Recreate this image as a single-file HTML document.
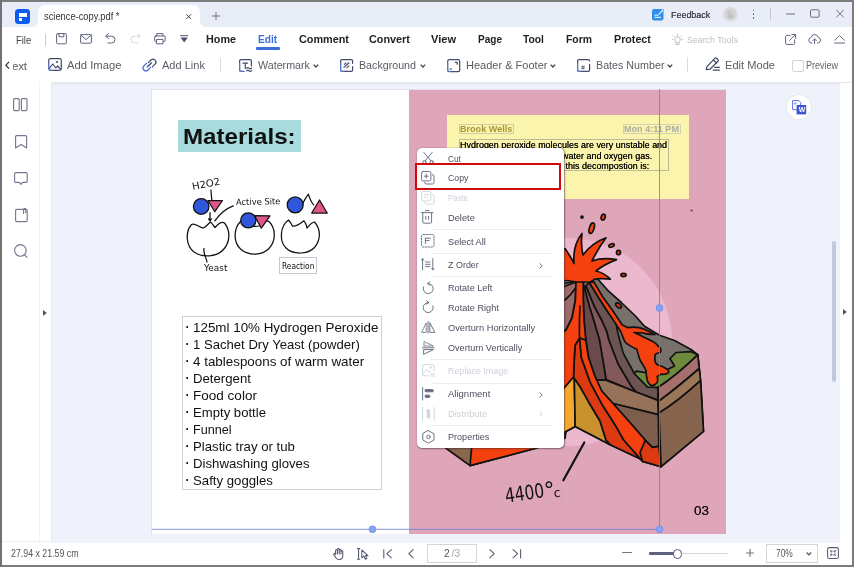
<!DOCTYPE html>
<html lang="en"><head><meta charset="utf-8"><title>science-copy.pdf</title>
<style>
html,body{margin:0;padding:0;}
body{width:854px;height:567px;overflow:hidden;background:#7c7c7c;position:relative;font-family:"Liberation Sans", sans-serif;}
.t{position:absolute;line-height:1;white-space:nowrap;transform-origin:0 50%;}
svg{overflow:visible;}
#app{position:absolute;left:0;top:0;width:854px;height:567px;overflow:hidden;will-change:transform;}
</style></head><body><div id="app">

<div style="position:absolute;left:2px;top:2px;width:850px;height:563px;background:#fff;"></div>
<div style="position:absolute;left:0px;top:0px;width:2px;height:567px;background:#727272;"></div>
<div style="position:absolute;left:2px;top:2px;width:850px;height:24.5px;background:#e9edf7;"></div>
<div style="position:absolute;left:15px;top:8.5px;width:15px;height:15px;background:#0b5cf3;border-radius:3.5px;"></div>
<div style="position:absolute;left:18.9px;top:13.3px;width:7.9px;height:3.5px;background:#fff;"></div>
<div style="position:absolute;left:18.9px;top:17.5px;width:3.3px;height:3.2px;background:#fff;"></div>
<div style="position:absolute;left:37.8px;top:5px;width:162px;height:22px;background:#fff;border-radius:7px 7px 0 0;"></div>
<svg style="position:absolute;left:31.8px;top:21px;" width="6" height="6" viewBox="0 0 6 6"><path d="M6 0 V6 H0 A6 6 0 0 0 6 0Z" fill="#fff"/></svg>
<svg style="position:absolute;left:199.8px;top:21px;" width="6" height="6" viewBox="0 0 6 6"><path d="M0 0 V6 H6 A6 6 0 0 1 0 0Z" fill="#fff"/></svg>
<span class="t" style="left:44.20px;top:11px;font-size:10.6px;color:#333;transform:scaleX(0.8797);">science-copy.pdf *</span>
<svg style="position:absolute;left:185.7px;top:13.6px;" width="5.4" height="5.4" viewBox="0 0 5.4 5.4"><path d="M0.3 0.3 L5.1 5.1 M5.1 0.3 L0.3 5.1" stroke="#444" stroke-width="1" fill="none"/></svg>
<svg style="position:absolute;left:211.8px;top:11.6px;" width="8" height="8" viewBox="0 0 8 8"><path d="M4 0 V8 M0 4 H8" stroke="#777" stroke-width="1" fill="none"/></svg>
<svg style="position:absolute;left:652px;top:8px;" width="12" height="12.5" viewBox="0 0 12 12.5"><rect x="0" y="1" width="11.5" height="11.5" rx="2" fill="#2f8feb"/><path d="M2.5 7.2 H6.5 M2.5 9.3 H9" stroke="#d8ecff" stroke-width="1.2"/><path d="M6 6.3 L10.8 0.8 L12 2 L7.2 7.3 Z" fill="#e8f3ff" stroke="#2f8feb" stroke-width="0.5"/></svg>
<span class="t" style="left:671.00px;top:10px;font-size:9.7px;color:#3c3c44;transform:scaleX(0.9226);text-shadow:0 0 0.5px #555;">Feedback</span>
<div style="position:absolute;left:723px;top:7px;width:14.5px;height:15px;background:radial-gradient(circle at 45% 45%,#c9c9c9 0,#d8d8d8 45%,#e4e6ec 75%,rgba(233,237,247,0) 100%);border-radius:50%;"></div>
<svg style="position:absolute;left:723px;top:7px;" width="15" height="15" viewBox="0 0 15 15"><path d="M4 3 L8 5 L6 9 L10 7 L11 11 L7 12 L4 10 L6 6Z" fill="#bdbdbd" opacity="0.8"/><path d="M8 2 L12 5 L10 8 L12 10" stroke="#cfcfcf" stroke-width="1.5" fill="none"/></svg>
<div style="position:absolute;left:752.6px;top:9.6px;width:1.8px;height:1.8px;background:#555;border-radius:50%;"></div>
<div style="position:absolute;left:752.6px;top:13.4px;width:1.8px;height:1.8px;background:#555;border-radius:50%;"></div>
<div style="position:absolute;left:752.6px;top:17.0px;width:1.8px;height:1.8px;background:#555;border-radius:50%;"></div>
<div style="position:absolute;left:770px;top:8px;width:1px;height:12px;background:#c4c7d2;"></div>
<svg style="position:absolute;left:786px;top:9px;" width="60" height="10" viewBox="0 0 60 10"><path d="M0 5 H9" stroke="#707070" stroke-width="1"/><rect x="24.5" y="0.8" width="8.6" height="7.4" rx="1" fill="none" stroke="#707070" stroke-width="1"/><path d="M50.3 1 L57.7 8.3 M57.7 1 L50.3 8.3" stroke="#707070" stroke-width="1"/></svg>
<span class="t" style="left:16.00px;top:35px;font-size:10.6px;color:#444;transform:scaleX(0.8899);">File</span>
<div style="position:absolute;left:45px;top:34px;width:1px;height:11.5px;background:#c9ccd6;"></div>
<svg style="position:absolute;left:55.8px;top:33px;" width="11" height="11.5" viewBox="0 0 11 11.5"><rect x="0.6" y="0.6" width="9.8" height="10.2" rx="1" stroke="#5f647e" stroke-width="1.0" fill="none" stroke-linejoin="round" stroke-linecap="round"/><path d="M3 0.8 V3.8 H7.8 V0.8" stroke="#5f647e" stroke-width="1.0" fill="none" stroke-linejoin="round" stroke-linecap="round"/></svg>
<svg style="position:absolute;left:80px;top:34px;" width="12" height="10" viewBox="0 0 12 10"><rect x="0.6" y="0.6" width="10.8" height="8.6" rx="1" stroke="#5f647e" stroke-width="1.0" fill="none" stroke-linejoin="round" stroke-linecap="round"/><path d="M0.8 1 L6 5.6 L11.2 1" stroke="#5f647e" stroke-width="1.0" fill="none" stroke-linejoin="round" stroke-linecap="round"/></svg>
<svg style="position:absolute;left:105.2px;top:33px;" width="11" height="11" viewBox="0 0 11 11"><path d="M0.8 3.2 H6.6 A3.4 3.4 0 0 1 6.6 10 H3" stroke="#5f647e" stroke-width="1.0" fill="none" stroke-linejoin="round" stroke-linecap="round"/><path d="M3.4 0.6 L0.8 3.2 L3.4 5.8" stroke="#5f647e" stroke-width="1.0" fill="none" stroke-linejoin="round" stroke-linecap="round"/></svg>
<svg style="position:absolute;left:129.5px;top:33px;" width="11" height="11" viewBox="0 0 11 11"><path d="M10.2 3.2 H4.4 A3.4 3.4 0 0 0 4.4 10 H8" stroke="#d5d7e0" stroke-width="1.0" fill="none" stroke-linejoin="round" stroke-linecap="round"/><path d="M7.6 0.6 L10.2 3.2 L7.6 5.8" stroke="#d5d7e0" stroke-width="1.0" fill="none" stroke-linejoin="round" stroke-linecap="round"/></svg>
<svg style="position:absolute;left:153.9px;top:32.8px;" width="12" height="11.5" viewBox="0 0 12 11.5"><path d="M2.8 3 V0.6 H9 V3" stroke="#5f647e" stroke-width="1.0" fill="none" stroke-linejoin="round" stroke-linecap="round"/><rect x="0.6" y="3" width="10.6" height="5.4" rx="1" stroke="#5f647e" stroke-width="1.0" fill="none" stroke-linejoin="round" stroke-linecap="round"/><rect x="2.8" y="6.4" width="6.2" height="4.4" fill="#fff" stroke="#5f647e" stroke-width="1.0" fill="none" stroke-linejoin="round" stroke-linecap="round"/></svg>
<svg style="position:absolute;left:180.3px;top:35px;" width="8.4" height="8" viewBox="0 0 8.4 8"><path d="M0.3 0.6 H8.1" stroke="#5f647e" stroke-width="1.1"/><path d="M0.6 2.6 H7.8 L4.2 7.4Z" fill="#4a4f6c"/></svg>
<span class="t" style="left:206.00px;top:34px;font-size:10.7px;color:#222;font-weight:bold;transform:scaleX(1.0091);">Home</span>
<span class="t" style="left:257.50px;top:34px;font-size:10.7px;color:#3a6fdc;font-weight:bold;transform:scaleX(0.9451);">Edit</span>
<span class="t" style="left:299.00px;top:34px;font-size:10.7px;color:#222;font-weight:bold;transform:scaleX(1.0133);">Comment</span>
<span class="t" style="left:369.00px;top:34px;font-size:10.7px;color:#222;font-weight:bold;transform:scaleX(1.0141);">Convert</span>
<span class="t" style="left:431.00px;top:34px;font-size:10.7px;color:#222;font-weight:bold;transform:scaleX(1.0335);">View</span>
<span class="t" style="left:477.50px;top:34px;font-size:10.7px;color:#222;font-weight:bold;transform:scaleX(0.9384);">Page</span>
<span class="t" style="left:523.00px;top:34px;font-size:10.7px;color:#222;font-weight:bold;transform:scaleX(0.9639);">Tool</span>
<span class="t" style="left:566.00px;top:34px;font-size:10.7px;color:#222;font-weight:bold;transform:scaleX(0.9720);">Form</span>
<span class="t" style="left:614.00px;top:34px;font-size:10.7px;color:#222;font-weight:bold;">Protect</span>
<div style="position:absolute;left:255.8px;top:47.2px;width:24.3px;height:2.5px;background:#3a6fdc;border-radius:1px;"></div>
<svg style="position:absolute;left:672px;top:33.5px;" width="11" height="11" viewBox="0 0 11 11"><path d="M5.5 2.6 A2.9 2.9 0 0 1 7.2 7.8 V9 H3.8 V7.8 A2.9 2.9 0 0 1 5.5 2.6Z" stroke="#b9bcc8" stroke-width="1.0" fill="none" stroke-linejoin="round" stroke-linecap="round"/><path d="M4.2 10.4 H6.8 M5.5 0.2 V1 M1.2 1.8 L1.8 2.4 M9.8 1.8 L9.2 2.4 M0.2 5.4 H1 M10 5.4 H10.8" stroke="#b9bcc8" stroke-width="1.0" fill="none" stroke-linejoin="round" stroke-linecap="round"/></svg>
<span class="t" style="left:686.90px;top:35px;font-size:9.5px;color:#bcbfc9;transform:scaleX(0.9279);">Search Tools</span>
<svg style="position:absolute;left:785px;top:33.5px;" width="11.5" height="11" viewBox="0 0 11.5 11"><path d="M5 1.4 H1.6 A1 1 0 0 0 0.6 2.4 V9.4 A1 1 0 0 0 1.6 10.4 H8.6 A1 1 0 0 0 9.6 9.4 V6" stroke="#5f647e" stroke-width="1.0" fill="none" stroke-linejoin="round" stroke-linecap="round"/><path d="M4.6 6.4 L10.6 0.6 M6.8 0.6 H10.6 V4.4" stroke="#5f647e" stroke-width="1.0" fill="none" stroke-linejoin="round" stroke-linecap="round"/></svg>
<svg style="position:absolute;left:808px;top:34px;" width="13.5" height="10" viewBox="0 0 13.5 10"><path d="M4 9 H3.2 A2.7 2.7 0 0 1 2.8 3.7 A3.9 3.9 0 0 1 10.3 3.2 A3 3 0 0 1 10.3 9 H9.4" stroke="#5f647e" stroke-width="1.0" fill="none" stroke-linejoin="round" stroke-linecap="round"/><path d="M6.6 9.6 V5 M4.9 6.6 L6.6 4.9 L8.3 6.6" stroke="#5f647e" stroke-width="1.0" fill="none" stroke-linejoin="round" stroke-linecap="round"/></svg>
<svg style="position:absolute;left:834px;top:35px;" width="11.5" height="8.5" viewBox="0 0 11.5 8.5"><path d="M0.8 5.2 L5.6 0.6 L10.4 5.2 M0.6 8 H10.6" stroke="#5f647e" stroke-width="1.0" fill="none" stroke-linejoin="round" stroke-linecap="round"/></svg>
<svg style="position:absolute;left:5px;top:60.8px;" width="5" height="8.4" viewBox="0 0 5 8.4"><path d="M4 0.8 L0.9 4.2 L4 7.6" stroke="#333" stroke-width="1.25" fill="none"/></svg>
<div style="position:absolute;left:12.5px;top:56px;width:20px;height:20px;overflow:hidden;">
<span class="t" style="left:-6.2px;top:4.00px;font-size:11.6px;color:#595c64;letter-spacing:-0.2px;">Text</span></div>
<svg style="position:absolute;left:48px;top:58.4px;" width="14" height="13" viewBox="0 0 14 13"><rect x="0.7" y="0.7" width="12.6" height="11.6" rx="1.8" stroke="#444a68" stroke-width="1.2" fill="none" stroke-linejoin="round" stroke-linecap="round"/><circle cx="9" cy="4" r="1.1" fill="#444a68"/><path d="M1.2 10.6 L4.8 6 L7.8 9.8 L9.6 8 L12.6 11.4" stroke="#444a68" stroke-width="1.2" fill="none" stroke-linejoin="round" stroke-linecap="round"/><path d="M0.7 4 V10.5 A1.8 1.8 0 0 0 2.5 12.3 H5" stroke="#5b86e0" stroke-width="1.2" fill="none" opacity="0.7"/></svg>
<span class="t" style="left:67.00px;top:59px;font-size:11.6px;color:#595c64;transform:scaleX(0.9714);">Add Image</span>
<svg style="position:absolute;left:142px;top:58px;" width="15" height="14" viewBox="0 0 15 14"><path d="M6.4 4.6 L9 2 A2.9 2.9 0 0 1 13.1 6.1 L10.4 8.8" stroke="#444a68" stroke-width="1.2" fill="none" stroke-linejoin="round" stroke-linecap="round"/><path d="M8.6 9.4 L6 12 A2.9 2.9 0 0 1 1.9 7.9 L4.6 5.2" stroke="#4d74d6" stroke-width="1.3" fill="none" stroke-linecap="round"/><path d="M5.4 8.8 L9.6 4.8" stroke="#444a68" stroke-width="1.2" fill="none" stroke-linejoin="round" stroke-linecap="round"/></svg>
<span class="t" style="left:162.00px;top:59px;font-size:11.6px;color:#595c64;transform:scaleX(0.9525);">Add Link</span>
<div style="position:absolute;left:219.5px;top:58px;width:1px;height:14px;background:#d9dbe3;"></div>
<svg style="position:absolute;left:239px;top:58.5px;" width="13.5" height="13.5" viewBox="0 0 13.5 13.5"><path d="M12.4 7 V2 A1.4 1.4 0 0 0 11 0.6 H2 A1.4 1.4 0 0 0 0.6 2 V11 A1.4 1.4 0 0 0 2 12.4 H5" stroke="#444a68" stroke-width="1.2" fill="none" stroke-linejoin="round" stroke-linecap="round"/><path d="M4 4.2 H8.6 M6.3 4.2 V9.4" stroke="#444a68" stroke-width="1.2" fill="none" stroke-linejoin="round" stroke-linecap="round"/><path d="M7.6 9.2 Q8.8 8 10 9.2 T12.6 9.2 M7.6 11.8 Q8.8 10.6 10 11.8 T12.6 11.8" stroke="#444a68" stroke-width="1.2" fill="none" stroke-linejoin="round" stroke-linecap="round"/><path d="M0.6 3.6 V11 A1.4 1.4 0 0 0 2 12.4 H4.6" stroke="#5b86e0" stroke-width="1.2" fill="none" opacity="0.75"/></svg>
<span class="t" style="left:258.00px;top:59px;font-size:11.6px;color:#595c64;transform:scaleX(0.9239);">Watermark</span>
<svg style="position:absolute;left:313px;top:63.8px;" width="6" height="4" viewBox="0 0 6 4"><path d="M0.6 0.6 L2.9 3 L5.2 0.6" stroke="#444" stroke-width="1.3" fill="none"/></svg>
<svg style="position:absolute;left:340px;top:58.5px;" width="13.5" height="13.5" viewBox="0 0 13.5 13.5"><path d="M12.6 7.6 V11 A1.4 1.4 0 0 1 11.2 12.4 H2 A1.4 1.4 0 0 1 0.6 11 V2 A1.4 1.4 0 0 1 2 0.6 H11.2 A1.4 1.4 0 0 1 12.6 2 V4.4" stroke="#444a68" stroke-width="1.2" fill="none" stroke-linejoin="round" stroke-linecap="round"/><path d="M4 8.4 L9 3.8 M4.4 5.4 L6 3.9 M7 8.6 L8.8 6.9" stroke="#444a68" stroke-width="1.2" fill="none" stroke-linejoin="round" stroke-linecap="round"/><path d="M0.6 3.6 V11 A1.4 1.4 0 0 0 2 12.4 H4.6" stroke="#5b86e0" stroke-width="1.2" fill="none" opacity="0.75"/></svg>
<span class="t" style="left:359.00px;top:59px;font-size:11.6px;color:#595c64;transform:scaleX(0.9207);">Background</span>
<svg style="position:absolute;left:419.5px;top:63.8px;" width="6" height="4" viewBox="0 0 6 4"><path d="M0.6 0.6 L2.9 3 L5.2 0.6" stroke="#444" stroke-width="1.3" fill="none"/></svg>
<svg style="position:absolute;left:447px;top:58.5px;" width="13.5" height="13.5" viewBox="0 0 13.5 13.5"><rect x="0.7" y="0.7" width="12" height="12" rx="1.6" stroke="#444a68" stroke-width="1.2" fill="none" stroke-linejoin="round" stroke-linecap="round"/><path d="M8.4 3.4 H10.2 V5.2 M3 10 H4.6" stroke="#444a68" stroke-width="1.2" fill="none" stroke-linejoin="round" stroke-linecap="round"/><path d="M0.6 3.6 V11 A1.4 1.4 0 0 0 2 12.4 H4.6" stroke="#5b86e0" stroke-width="1.2" fill="none" opacity="0.75"/></svg>
<span class="t" style="left:465.50px;top:59px;font-size:11.6px;color:#595c64;transform:scaleX(0.9504);">Header &amp; Footer</span>
<svg style="position:absolute;left:549.5px;top:63.8px;" width="6" height="4" viewBox="0 0 6 4"><path d="M0.6 0.6 L2.9 3 L5.2 0.6" stroke="#444" stroke-width="1.3" fill="none"/></svg>
<svg style="position:absolute;left:577px;top:58.5px;" width="13.5" height="13.5" viewBox="0 0 13.5 13.5"><path d="M12.6 5.4 V11 A1.4 1.4 0 0 1 11.2 12.4 H2 A1.4 1.4 0 0 1 0.6 11 V2 A1.4 1.4 0 0 1 2 0.6 H11.2 A1.4 1.4 0 0 1 12.6 2" stroke="#444a68" stroke-width="1.2" fill="none" stroke-linejoin="round" stroke-linecap="round"/><path d="M4.4 7.6 H7.6 M4.4 9.4 H7.6 M5.4 6.6 L5 10.4 M7 6.6 L6.6 10.4" stroke="#5f647e" stroke-width="0.8" fill="none"/><path d="M0.6 3.6 V11 A1.4 1.4 0 0 0 2 12.4 H4.6" stroke="#5b86e0" stroke-width="1.2" fill="none" opacity="0.75"/></svg>
<span class="t" style="left:595.50px;top:59px;font-size:11.6px;color:#595c64;transform:scaleX(0.9239);">Bates Number</span>
<svg style="position:absolute;left:667px;top:63.8px;" width="6" height="4" viewBox="0 0 6 4"><path d="M0.6 0.6 L2.9 3 L5.2 0.6" stroke="#444" stroke-width="1.3" fill="none"/></svg>
<div style="position:absolute;left:687px;top:57px;width:1px;height:15px;background:#d9dbe3;"></div>
<svg style="position:absolute;left:705px;top:57px;" width="15.5" height="14.5" viewBox="0 0 15.5 14.5"><path d="M1.2 12.6 L2 9.6 L9.8 1.4 A1.3 1.3 0 0 1 11.6 1.3 L12.9 2.5 A1.3 1.3 0 0 1 13 4.3 L5 12.2 Z" stroke="#444a68" stroke-width="1.2" fill="none" stroke-linejoin="round" stroke-linecap="round"/><path d="M8.4 3 L11.4 6" stroke="#444a68" stroke-width="1.2" fill="none" stroke-linejoin="round" stroke-linecap="round"/><path d="M9.6 10.4 H14.4 M8.4 13.2 H14.4" stroke="#444a68" stroke-width="1.2" fill="none" stroke-linejoin="round" stroke-linecap="round"/></svg>
<span class="t" style="left:725.00px;top:59px;font-size:11.6px;color:#595c64;transform:scaleX(0.9573);">Edit Mode</span>
<div style="position:absolute;left:792px;top:59.5px;width:10px;height:10px;border:1px solid #d3d5dc;border-radius:2px;background:#fff;"></div>
<span class="t" style="left:806.30px;top:60px;font-size:10.6px;color:#666;transform:scaleX(0.8488);">Preview</span>
<div style="position:absolute;left:2px;top:82px;width:850px;height:461px;background:#eff2fb;"></div>
<div style="position:absolute;left:2px;top:82px;width:850px;height:3.5px;background:linear-gradient(#e3e6ee,#eff2fb);"></div>
<div style="position:absolute;left:2px;top:82px;width:37px;height:461px;background:#fff;"></div>
<div style="position:absolute;left:39px;top:82px;width:1px;height:461px;background:#f3f3f7;"></div>
<div style="position:absolute;left:40px;top:82px;width:11px;height:461px;background:#fff;"></div>
<div style="position:absolute;left:51px;top:84px;width:2px;height:458px;background:linear-gradient(90deg,#e8ebf4,#eff2fb);"></div>
<div style="position:absolute;left:840px;top:83px;width:12px;height:460px;background:#fff;"></div>
<svg style="position:absolute;left:13px;top:98px;" width="15" height="13.5" viewBox="0 0 15 13.5"><rect x="0.6" y="0.6" width="5.6" height="12" rx="1" stroke="#747890" stroke-width="1.15" fill="none" stroke-linejoin="round" stroke-linecap="round"/><rect x="8.4" y="0.6" width="5.6" height="12" rx="1" stroke="#747890" stroke-width="1.15" fill="none" stroke-linejoin="round" stroke-linecap="round"/></svg>
<svg style="position:absolute;left:14.5px;top:134.5px;" width="12.5" height="14" viewBox="0 0 12.5 14"><path d="M0.6 13 V1.6 A1 1 0 0 1 1.6 0.6 H10.6 A1 1 0 0 1 11.6 1.6 V13 L6.1 9.6Z" stroke="#747890" stroke-width="1.15" fill="none" stroke-linejoin="round" stroke-linecap="round"/></svg>
<svg style="position:absolute;left:14px;top:171.5px;" width="14" height="13.5" viewBox="0 0 14 13.5"><path d="M1.8 0.6 H12 A1.2 1.2 0 0 1 13.2 1.8 V9.2 A1.2 1.2 0 0 1 12 10.4 H8.6 L6.9 12.4 L5.2 10.4 H1.8 A1.2 1.2 0 0 1 0.6 9.2 V1.8 A1.2 1.2 0 0 1 1.8 0.6Z" stroke="#747890" stroke-width="1.15" fill="none" stroke-linejoin="round" stroke-linecap="round"/></svg>
<svg style="position:absolute;left:14.5px;top:207.5px;" width="13" height="14.5" viewBox="0 0 13 14.5"><rect x="0.6" y="1.4" width="11.6" height="12.2" rx="1.2" stroke="#747890" stroke-width="1.15" fill="none" stroke-linejoin="round" stroke-linecap="round"/><path d="M8.6 5.6 V1.4 A1.1 1.1 0 0 1 10.8 1.4 V4.6" stroke="#747890" stroke-width="1.15" fill="none" stroke-linejoin="round" stroke-linecap="round"/></svg>
<svg style="position:absolute;left:14px;top:244px;" width="14" height="14.5" viewBox="0 0 14 14.5"><circle cx="6.4" cy="6.4" r="5.8" stroke="#747890" stroke-width="1.15" fill="none" stroke-linejoin="round" stroke-linecap="round"/><path d="M10.6 10.8 L13 13.4" stroke="#747890" stroke-width="1.15" fill="none" stroke-linejoin="round" stroke-linecap="round"/></svg>
<svg style="position:absolute;left:42.7px;top:309.5px;" width="4" height="6" viewBox="0 0 4 6"><path d="M0 0 L3.8 2.9 L0 5.8Z" fill="#4c4f6c"/></svg>
<svg style="position:absolute;left:843px;top:309.2px;" width="4" height="6" viewBox="0 0 4 6"><path d="M0 0 L3.8 2.9 L0 5.8Z" fill="#4c4f6c"/></svg>
<div style="position:absolute;left:832px;top:241px;width:3.5px;height:141px;background:#c3c7db;border-radius:2px;"></div>
<div style="position:absolute;left:787px;top:95px;width:24px;height:24px;background:#fff;border-radius:50%;box-shadow:0 0 0 0.8px #e7e4e4;"></div>
<svg style="position:absolute;left:792px;top:100px;" width="15" height="15" viewBox="0 0 15 15"><path d="M0.6 0.6 H6.8 L8.6 2.4 V9.6 H0.6Z" fill="#fff" stroke="#4a63dc" stroke-width="0.9"/><path d="M2.2 2.6 L3.2 4.4 L4.4 2.6" stroke="#4a63dc" stroke-width="0.8" fill="none"/><rect x="4.6" y="5" width="9.6" height="9.4" fill="#3c55d6"/></svg>
<span class="t" style="left:798.80px;top:107px;font-size:6.9px;color:#fff;font-weight:bold;">W</span>
<div style="position:absolute;left:151px;top:89px;width:575.2px;height:444.5px;background:#e0e3ec;"></div>
<div style="position:absolute;left:152px;top:90px;width:257px;height:443.5px;background:#fff;"></div>
<div style="position:absolute;left:409px;top:90px;width:317.2px;height:443.5px;background:#dfa6ba;overflow:hidden;"><div style="position:absolute;left:55.4px;top:148.1px;width:207.6px;height:207.6px;border-radius:50%;background:#ecb8ce;"></div></div>
<div style="position:absolute;left:178px;top:120px;width:122.6px;height:32.3px;background:#a7dbdd;"></div>
<span class="t" style="left:182.90px;top:126px;font-size:22.4px;color:#111;font-weight:bold;transform:scaleX(1.0777);">Materials:</span>
<div style="position:absolute;left:182.2px;top:316.2px;width:197.6px;height:171.8px;border:1px solid #cfd1d9;background:#fff;"></div>
<span class="t" style="left:185.40px;top:321px;font-size:12px;color:#111;font-weight:bold;">·</span>
<span class="t" style="left:193.00px;top:321px;font-size:13.2px;color:#111;transform:scaleX(1.0153);">125ml 10% Hydrogen Peroxide</span>
<span class="t" style="left:185.40px;top:338px;font-size:12px;color:#111;font-weight:bold;">·</span>
<span class="t" style="left:193.00px;top:338px;font-size:13.2px;color:#111;transform:scaleX(0.9939);">1 Sachet Dry Yeast (powder)</span>
<span class="t" style="left:185.40px;top:355px;font-size:12px;color:#111;font-weight:bold;">·</span>
<span class="t" style="left:193.00px;top:355px;font-size:13.2px;color:#111;transform:scaleX(1.0151);">4 tablespoons of warm water</span>
<span class="t" style="left:185.40px;top:372px;font-size:12px;color:#111;font-weight:bold;">·</span>
<span class="t" style="left:193.00px;top:372px;font-size:13.2px;color:#111;">Detergent</span>
<span class="t" style="left:185.40px;top:389px;font-size:12px;color:#111;font-weight:bold;">·</span>
<span class="t" style="left:193.00px;top:389px;font-size:13.2px;color:#111;transform:scaleX(1.0262);">Food color</span>
<span class="t" style="left:185.40px;top:406px;font-size:12px;color:#111;font-weight:bold;">·</span>
<span class="t" style="left:193.00px;top:406px;font-size:13.2px;color:#111;transform:scaleX(0.9950);">Empty bottle</span>
<span class="t" style="left:185.40px;top:423px;font-size:12px;color:#111;font-weight:bold;">·</span>
<span class="t" style="left:193.00px;top:423px;font-size:13.2px;color:#111;transform:scaleX(0.9588);">Funnel</span>
<span class="t" style="left:185.40px;top:440px;font-size:12px;color:#111;font-weight:bold;">·</span>
<span class="t" style="left:193.00px;top:440px;font-size:13.2px;color:#111;">Plastic tray or tub</span>
<span class="t" style="left:185.40px;top:457px;font-size:12px;color:#111;font-weight:bold;">·</span>
<span class="t" style="left:193.00px;top:457px;font-size:13.2px;color:#111;">Dishwashing gloves</span>
<span class="t" style="left:185.40px;top:474px;font-size:12px;color:#111;font-weight:bold;">·</span>
<span class="t" style="left:193.00px;top:474px;font-size:13.2px;color:#111;">Safty goggles</span>
<svg style="position:absolute;left:0;top:0" width="854" height="567" viewBox="0 0 854 567" fill="none" stroke="#111" stroke-width="1.25" stroke-linejoin="round" stroke-linecap="round"><path d="M191.5 224.5 C185 232 186 246 194 252 C203 258 216 257 223 250 C230 243 231 231 224.5 223 C222 221 218 224 215 227.5 C213 225 212 223 210.5 222 C208 224 206 227 203.5 228 C199 228 195 222 191.5 224.5Z" fill="#fff"/><path d="M240.5 221.5 C233 229 233.5 243 241 249.5 C249 256 262 255.5 269 248.5 C276 241 276 229 269.5 222 C266 219 262 222 259 226 C255 227 247 226 240.5 221.5Z" fill="#fff"/><path d="M288.5 220 C280 226 279 241 286 248 C293 255 308 254.5 314.5 247.5 C321 240 321 229 314.5 222 C311 222.5 309 226 307 228 C306.5 225 305.5 222.5 304 220.8 C300 224 296 226.5 292.5 226.2 C291.5 224 290 221.5 288.5 220Z" fill="#fff"/><circle cx="201.2" cy="206.5" r="7.8" fill="#3056dc"/><path d="M208 200.5 L222.5 200.5 L214.8 211.7Z" fill="#e0558c"/><circle cx="248.3" cy="220.4" r="7.6" fill="#3056dc"/><path d="M254.5 215.6 L270 215.8 L261.3 228.2Z" fill="#e0558c"/><circle cx="295.2" cy="204.9" r="8" fill="#3056dc"/><path d="M319.5 200 L311.7 213 L327.2 213Z" fill="#e0558c"/><path d="M210.9 190 L211.8 200"/><path d="M210 212.5 V220.5 M208.6 218.8 L210 220.8 L211.4 218.8"/><path d="M233.2 205.9 C225 209 219 215 214.8 220.8"/><path d="M303 203 C305 199 307 196 308.4 194.2 C309.5 198 311 202 313.7 204.9"/><path d="M204 248.5 C203 253 206 257 207 262"/></svg>
<span class="t" style="left:193.20px;top:182px;font-size:9.8px;color:#111;font-family:'DejaVu Sans','Liberation Sans',sans-serif;transform:rotate(-11deg) scaleX(1.0344);transform-origin:0 100%;">H2O2</span>
<span class="t" style="left:235.80px;top:198px;font-size:8.6px;color:#111;font-family:'DejaVu Sans','Liberation Sans',sans-serif;transform:rotate(-1deg) scaleX(0.9706);transform-origin:0 100%;">Active Site</span>
<span class="t" style="left:204.00px;top:264px;font-size:8.6px;color:#111;transform:scaleX(1.0389);font-family:'DejaVu Sans','Liberation Sans',sans-serif;">Yeast</span>
<div style="position:absolute;left:278.8px;top:257.3px;width:38.2px;height:16.5px;border:1px solid #c6c8d6;box-sizing:border-box;"></div>
<span class="t" style="left:281.50px;top:262px;font-size:8.4px;color:#111;transform:scaleX(0.8908);font-family:'DejaVu Sans','Liberation Sans',sans-serif;">Reaction</span>
<div style="position:absolute;left:447px;top:115px;width:242px;height:83.5px;background:#fbf4ad;"></div>
<div style="position:absolute;left:458.9px;top:124px;width:54.7px;height:9.8px;border:1px solid #d2cda4;box-sizing:border-box;"></div>
<span class="t" style="left:459.80px;top:124px;font-size:9.6px;color:#a8953a;font-weight:bold;transform:scaleX(0.9457);">Brook Wells</span>
<div style="position:absolute;left:622.8px;top:124px;width:58px;height:9.8px;border:1px solid #d2d0b4;box-sizing:border-box;"></div>
<span class="t" style="left:624.30px;top:124px;font-size:9.6px;color:#adac9f;font-weight:bold;transform:scaleX(0.9459);">Mon 4:11 PM</span>
<div style="position:absolute;left:458.9px;top:139.3px;width:210px;height:31.3px;border:1px solid #bdb994;box-sizing:border-box;"></div>
<span class="t" style="left:459.80px;top:140px;font-size:9.9px;color:#000;transform:scaleX(0.9068);text-shadow:0 0 0.4px #222;">Hydrogen peroxide molecules are very unstable and</span>
<span class="t" style="left:459.87px;top:151px;font-size:9.9px;color:#000;transform:scaleX(0.9068);text-shadow:0 0 0.4px #222;">naturally decompose into water and oxygen gas.</span>
<span class="t" style="left:459.88px;top:161px;font-size:9.9px;color:#000;transform:scaleX(0.9068);text-shadow:0 0 0.4px #222;">The chemical equation for this decompostion is:</span>
<svg style="position:absolute;left:0;top:0" width="854" height="567" viewBox="0 0 854 567" stroke="#111" stroke-width="1.7" stroke-linejoin="round" stroke-linecap="round"><path d="M430 330 L445.6 448 L470 465.6 L535 448.5 L565 438 L575 376 L560 300Z" fill="#8a664e"/><path d="M470 465.6 L535 448.5 L565 438 L560 380 L476 400Z" fill="#f4410f"/><path d="M540 300 L565 283 L576 281.5 L597.3 278.5 L608.6 291.2 L621.3 302.5 L635.4 316 L644.5 326.2 L659.5 335.2 L674.5 340.5 L691 349.5 L697.7 354.7 L700.8 383.8 L703.5 431.4 L661.1 466.7 L641 459.3 L610.7 445 L575.2 426.4 L565.5 431.7 L540 440Z" fill="#78716b" /><path d="M550 292 L576 282 L575.4 300 L572 318 L566 330 L550 340Z" fill="#9c6c6d" /><path d="M565 300 C570 296 573 292 575.5 288" fill="none"/><path d="M585.8 285.9 L594.4 306.9 L601.5 320 L606.7 331.6 L608.7 339.8 L617.9 363.7 L631.1 386.1 L636 392 L658 400 L658 387.3 L647.5 387 L634.3 373.5 L623.2 353.1 L617.9 333.2 L615.3 320 L608.5 313 L598.8 298 L589.5 282.7Z" fill="#6c5452" /><path d="M584.5 288.3 L589.5 306.9 L593.6 320 L599.4 339.8 L603.4 363.7 L606 379.5 L636 392 L631.1 386.1 L617.9 363.7 L608.7 339.8 L606.7 331.6 L601.5 320 L594.4 306.9 L585.8 285.9Z" fill="#83595c" /><path d="M583.2 283 L583.3 300 L584 320 L585.8 340 L588.5 357.6 L594.6 375.3 L596.5 380 L606 380.2 L606 379.5 L603.4 363.7 L599.4 339.8 L593.6 320 L589.5 306.9 L584.5 288.3Z" fill="#6b4a4c" /><path d="M545 410 L572.6 378 L574.3 378 L575.2 426.4 L565.5 431.7 L545 442Z" fill="#f6a82e" /><path d="M596.5 380 L606 380.2 L636 392 L658 400.5 L658.3 414.7 L613 403.5 L601.7 391Z" fill="#97725a" /><path d="M613 403.5 L658.3 414.7 L658.8 446.4 L652.3 447.3 L645.3 440.3 L633 426 L620.6 412Z" fill="#7d5e4c" /><path d="M573.5 377 L579.6 385.9 L588.5 401.7 L600 421 L606 440 L610.7 445 L575.2 426.4 L574.3 378Z" fill="#c8912e" /><path d="M579.6 338 L581.4 357.6 L590.2 382.3 L602.6 405.3 L615 424.7 L623.7 440 L642.6 461.4 L641 459.3 L610.7 445 L606 440 L600 421 L588.5 401.7 L579.6 385.9 L573.5 377 L574.3 357.6 L575.2 345Z" fill="#dc3a10" /><path d="M579.6 338 L585.8 340 L588.5 357.6 L594.6 375.3 L601.7 391 L613 403.5 L620.6 412 L633 426 L645.3 440.3 L652.3 447.3 L658.8 446.4 L661.1 466.7 L642.6 461.4 L623.7 440 L615 424.7 L602.6 405.3 L590.2 382.3 L581.4 357.6Z" fill="#f4410f" /><path d="M645.3 440.3 L652.3 447.3 L658.8 446.4 L661.1 466.7 L642.6 461.4 L640 452.6Z" fill="#dc3a10" /><path d="M576 281.5 L583.2 281.5 L583.3 300 L584 320 L585.8 340 L579.6 338 L575.2 345 L574.3 357.6 L573.5 377 L572.6 378 L550 404 L545 404 L545 345 L566 330 L572 318 L575.4 300Z" fill="#f4410f" /><path d="M579.6 338 C579 328 579.5 318 580 306" fill="none"/><path d="M697.7 354.7 L700.8 383.8 L703.5 431.4 L661.1 466.7 L658 387.3 L682 369Z" fill="#87644d" /><path d="M697.7 354.7 L699.3 368.5 C686 380 670 393 658.4 401.5 L658 387.3 C668 381 684 368 697.7 354.7Z" fill="#a66f6d"/><path d="M699.3 368.5 L700.5 380.5 C688 392 672 405 658.8 413 L658.4 401.5 C670 393 686 380 699.3 368.5Z" fill="#9b7658"/><path d="M670 358.5 L676 352.5 L691 351.7 L697.7 354.7 C684 368 668 381 658 387.3 L647.5 387 L634.3 373.5 L636.2 371.2 L648 373 L668.5 369 L674.5 366Z" fill="#6f8a3d"/><path d="M589.5 282.7 L593.9 282 L602.5 296.5 L613.3 311.5 L622.3 325 L628 327.7 C634 326.5 640 327.5 644.5 329.2 L655 334.5 C650 334.5 646 334 643 333 L634 332.5 C638 334 641 335.5 644.5 337.5 C650 340 655 342 657.2 345 C661 348 662 351 660.2 352.5 C656 353 654 355 655 357 C654.5 361 655 363 657.2 364.5 C660 366 663 366.5 665.5 368.2 C668 369.5 669.5 371.5 668.5 372.7 C666 374.5 663 374.5 661 374.2 L657.2 376.5 C658 379 658 381 657.2 382.5 C655 385 653 386 651.2 385.5 C649 384.5 648 383 647.5 381 C646.5 377 646 374 646 370.5 C644 366 641.5 363 640 360 C638.5 356 637.5 353 637 349.5 C633 347.5 628 345 625 342 C623.5 338.5 622 335 620.5 331 L608.5 313 L598.8 298Z" fill="#f4410f"/><ellipse cx="618.5" cy="305.5" rx="3.3" ry="1.8" transform="rotate(35 618.5 305.5)" fill="#f4410f"/><path d="M540 262 C550 255 558 251 565 248.5 C568 253 571.5 258 574 263.5 C573 251 576 241 582 233.5 C581 242 581.5 249 583 255 C589 247 597 241 606 237.8 C600.5 245 596 253 592 261 C599 258.5 608 258 616.5 259.6 C609 262.5 601.5 266.5 596 271 C601 272 606 274.8 610.3 279.2 C605 278.5 600 278.5 595 279 L590.5 282 L576.5 282 L567 280.5 L545 285Z" fill="#f4410f"/><circle cx="582" cy="217.1" r="1.0" fill="#c8320f"/><ellipse cx="603.2" cy="217.1" rx="2" ry="3" transform="rotate(15 603.2 217.1)" fill="#f4410f"/><ellipse cx="591.7" cy="228.2" rx="2.3" ry="5.4" transform="rotate(18 591.7 228.2)" fill="#f4410f"/><ellipse cx="611.5" cy="245.5" rx="2.8" ry="1.6" transform="rotate(-20 611.5 245.5)" fill="#f4410f"/><ellipse cx="618.5" cy="252.5" rx="2" ry="2.2" fill="#f4410f"/><ellipse cx="623.5" cy="275" rx="2.6" ry="1.6" fill="#f4410f"/><path d="M584.3 442.5 L563.4 480.3" stroke-width="2.2" fill="none"/><circle cx="691.7" cy="210.4" r="1.2" fill="#8c4f6e" stroke="none"/></svg>
<svg style="position:absolute;left:0;top:0" width="854" height="567" viewBox="0 0 854 567"><g transform="rotate(-8 532 494)" font-family="'DejaVu Sans','Liberation Sans',sans-serif" fill="#111"><rect x="502" y="480" width="60" height="26" fill="none" stroke="#d49aae" stroke-width="0.6" stroke-dasharray="1 1"/><text x="505" y="499" font-size="20" textLength="39.5" lengthAdjust="spacingAndGlyphs">4400</text><text x="544.5" y="500" font-size="22">°</text><text x="553.5" y="500.5" font-size="12.5">c</text></g></svg>
<span class="t" style="left:693.50px;top:505px;font-size:12px;color:#1a1015;transform:scaleX(1.1238);text-shadow:0 0 0.5px #1a1015;">03</span>
<svg style="position:absolute;left:0;top:0" width="854" height="567" viewBox="0 0 854 567"><path d="M659.5 89 V529.3 M152 529.3 H659.5" stroke="#6a7bd4" stroke-width="0.8" fill="none"/><g fill="#86a4f6" stroke="#6c8ae6" stroke-width="0.8"><circle cx="659.5" cy="308" r="3.4"/><circle cx="372.5" cy="529.3" r="3.4"/><circle cx="659.6" cy="529.3" r="3.4"/></g></svg>
<div style="position:absolute;left:417.2px;top:148px;width:147.3px;height:300px;background:#fff;border-radius:5px;box-shadow:0.5px 0.5px 1.5px rgba(60,40,50,0.55);"></div>
<span class="t" style="left:447.60px;top:154px;font-size:9.4px;color:#4b4e5e;transform:scaleX(0.8819);">Cut</span>
<span class="t" style="left:447.60px;top:173px;font-size:9.4px;color:#4b4e5e;transform:scaleX(0.9296);">Copy</span>
<span class="t" style="left:447.60px;top:193px;font-size:9.4px;color:#cdd0d8;transform:scaleX(0.8279);">Paste</span>
<span class="t" style="left:447.60px;top:213px;font-size:9.4px;color:#4b4e5e;transform:scaleX(0.9900);">Delete</span>
<span class="t" style="left:447.60px;top:237px;font-size:9.4px;color:#4b4e5e;transform:scaleX(0.9802);">Select All</span>
<span class="t" style="left:447.60px;top:260px;font-size:9.4px;color:#4b4e5e;transform:scaleX(0.9542);">Z Order</span>
<span class="t" style="left:447.60px;top:283px;font-size:9.4px;color:#4b4e5e;transform:scaleX(0.9655);">Rotate Left</span>
<span class="t" style="left:447.60px;top:303px;font-size:9.4px;color:#4b4e5e;transform:scaleX(0.9741);">Rotate Right</span>
<span class="t" style="left:447.60px;top:323px;font-size:9.4px;color:#4b4e5e;transform:scaleX(0.9900);">Overturn Horizontally</span>
<span class="t" style="left:447.60px;top:343px;font-size:9.4px;color:#4b4e5e;transform:scaleX(0.9688);">Overturn Vertically</span>
<span class="t" style="left:447.60px;top:366px;font-size:9.4px;color:#cdd0d8;transform:scaleX(0.9553);">Replace Image</span>
<span class="t" style="left:447.60px;top:389px;font-size:9.4px;color:#4b4e5e;transform:scaleX(1.0144);">Alignment</span>
<span class="t" style="left:447.60px;top:409px;font-size:9.4px;color:#cdd0d8;transform:scaleX(0.9924);">Distribute</span>
<span class="t" style="left:447.60px;top:432px;font-size:9.4px;color:#4b4e5e;transform:scaleX(0.9663);">Properties</span>
<div style="position:absolute;left:430.5px;top:229.3px;width:121.5px;height:1px;background:#ececf1;"></div>
<div style="position:absolute;left:430.5px;top:252.5px;width:121.5px;height:1px;background:#ececf1;"></div>
<div style="position:absolute;left:430.5px;top:276.2px;width:121.5px;height:1px;background:#ececf1;"></div>
<div style="position:absolute;left:430.5px;top:358.5px;width:121.5px;height:1px;background:#ececf1;"></div>
<div style="position:absolute;left:430.5px;top:382.8px;width:121.5px;height:1px;background:#ececf1;"></div>
<div style="position:absolute;left:430.5px;top:425.4px;width:121.5px;height:1px;background:#ececf1;"></div>
<svg style="position:absolute;left:539px;top:262.7px;" width="4" height="6" viewBox="0 0 4 6"><path d="M0.5 0.4 L3.2 2.9 L0.5 5.4" stroke="#666" stroke-width="0.9" fill="none"/></svg>
<svg style="position:absolute;left:539px;top:391.7px;" width="4" height="6" viewBox="0 0 4 6"><path d="M0.5 0.4 L3.2 2.9 L0.5 5.4" stroke="#666" stroke-width="0.9" fill="none"/></svg>
<svg style="position:absolute;left:539px;top:411.4px;" width="4" height="6" viewBox="0 0 4 6"><path d="M0.5 0.4 L3.2 2.9 L0.5 5.4" stroke="#ccc" stroke-width="0.9" fill="none"/></svg>
<svg style="position:absolute;left:421.5px;top:152px;" width="12" height="11.5" viewBox="0 0 12 11.5"><path d="M1.8 0.4 L9 9 M10.2 0.4 L3 9" stroke="#696d84" stroke-width="0.95" fill="none" stroke-linejoin="round" stroke-linecap="round"/><circle cx="2.4" cy="10" r="1.6" stroke="#696d84" stroke-width="0.95" fill="none" stroke-linejoin="round" stroke-linecap="round"/><circle cx="9.6" cy="10" r="1.6" stroke="#696d84" stroke-width="0.95" fill="none" stroke-linejoin="round" stroke-linecap="round"/></svg>
<svg style="position:absolute;left:420.9px;top:171.2px;" width="13.5" height="13.5" viewBox="0 0 13.5 13.5"><rect x="0.5" y="0.5" width="9.4" height="9.4" rx="1.6" fill="#fff" stroke="#696d84" stroke-width="0.95" fill="none" stroke-linejoin="round" stroke-linecap="round"/><path d="M11.4 3.6 A1.6 1.6 0 0 1 13 5.2 V11.4 A1.6 1.6 0 0 1 11.4 13 H5.2 A1.6 1.6 0 0 1 3.6 11.4" stroke="#696d84" stroke-width="0.95" fill="none" stroke-linejoin="round" stroke-linecap="round"/><path d="M5.2 3.2 V7.2 M3.2 5.2 H7.2" stroke="#696d84" stroke-width="0.95" fill="none" stroke-linejoin="round" stroke-linecap="round"/></svg>
<svg style="position:absolute;left:420.9px;top:190.7px;" width="13.5" height="13.5" viewBox="0 0 13.5 13.5"><rect x="0.5" y="0.5" width="9.4" height="9.4" rx="1.6" stroke="#d3d5de" stroke-width="0.95" fill="none" stroke-linejoin="round" stroke-linecap="round"/><path d="M11.4 3.6 A1.6 1.6 0 0 1 13 5.2 V11.4 A1.6 1.6 0 0 1 11.4 13 H5.2 A1.6 1.6 0 0 1 3.6 11.4" stroke="#d3d5de" stroke-width="0.95" fill="none" stroke-linejoin="round" stroke-linecap="round"/><path d="M3 3.6 H7.4 M3 6 H6" stroke="#d3d5de" stroke-width="0.95" fill="none" stroke-linejoin="round" stroke-linecap="round"/></svg>
<svg style="position:absolute;left:421px;top:209.6px;" width="12.5" height="14" viewBox="0 0 12.5 14"><path d="M0.5 2.6 H12 M4.4 0.6 H8" stroke="#696d84" stroke-width="0.95" fill="none" stroke-linejoin="round" stroke-linecap="round"/><path d="M1.8 2.8 V12 A1.2 1.2 0 0 0 3 13.2 H9.4 A1.2 1.2 0 0 0 10.6 12 V2.8" stroke="#696d84" stroke-width="0.95" fill="none" stroke-linejoin="round" stroke-linecap="round"/><path d="M4.8 6.4 V9.4 M7.6 6.4 V9.4" stroke="#696d84" stroke-width="0.95" fill="none" stroke-linejoin="round" stroke-linecap="round"/></svg>
<svg style="position:absolute;left:421px;top:234.3px;" width="13.5" height="13.5" viewBox="0 0 13.5 13.5"><rect x="0.5" y="0.5" width="12.5" height="12.5" rx="1.5" stroke-dasharray="1.6 1.3" stroke="#696d84" stroke-width="0.95" fill="none" stroke-linejoin="round" stroke-linecap="round"/><path d="M4.4 4.2 H9.4 M4.4 6.6 H8 M4.4 4.2 V9.4" stroke="#696d84" stroke-width="0.95" fill="none" stroke-linejoin="round" stroke-linecap="round"/></svg>
<svg style="position:absolute;left:421px;top:258px;" width="13.5" height="12.5" viewBox="0 0 13.5 12.5"><path d="M1.6 12 V0.8 M0.5 2.2 L1.6 0.6 L2.7 2.2 M11.8 0.6 V11.8 M10.7 10.4 L11.8 12 L12.9 10.4 M4.6 4 H9 M4.6 6.3 H9 M4.6 8.6 H9" stroke="#696d84" stroke-width="0.95" fill="none" stroke-linejoin="round" stroke-linecap="round"/></svg>
<svg style="position:absolute;left:421.5px;top:280.7px;" width="12.5" height="13.5" viewBox="0 0 12.5 13.5"><path d="M1.5 5.9 A5 5 0 1 0 5.6 2.6" stroke="#696d84" stroke-width="0.95" fill="none" stroke-linejoin="round" stroke-linecap="round"/><path d="M7.8 0.8 L5.6 2.6 L8 4.2" stroke="#696d84" stroke-width="0.95" fill="none" stroke-linejoin="round" stroke-linecap="round"/></svg>
<svg style="position:absolute;left:421.5px;top:299.8px;" width="12.5" height="13.5" viewBox="0 0 12.5 13.5"><path d="M10.9 5.9 A5 5 0 1 1 6.8 2.6" stroke="#696d84" stroke-width="0.95" fill="none" stroke-linejoin="round" stroke-linecap="round"/><path d="M4.6 0.8 L6.8 2.6 L4.4 4.2" stroke="#696d84" stroke-width="0.95" fill="none" stroke-linejoin="round" stroke-linecap="round"/></svg>
<svg style="position:absolute;left:420.5px;top:321px;" width="14" height="12.5" viewBox="0 0 14 12.5"><path d="M7 0.4 V12" stroke="#696d84" stroke-width="0.95" fill="none" stroke-linejoin="round" stroke-linecap="round"/><path d="M8.8 2 V11.4 H13.4Z" stroke="#696d84" stroke-width="0.95" fill="none" stroke-linejoin="round" stroke-linecap="round"/><path d="M5.2 2 V11.4 H0.6Z" stroke-dasharray="1.5 1.2" stroke="#696d84" stroke-width="0.95" fill="none" stroke-linejoin="round" stroke-linecap="round"/></svg>
<svg style="position:absolute;left:421.5px;top:340.5px;" width="12.5" height="13.5" viewBox="0 0 12.5 13.5"><path d="M0.4 6.8 H12" stroke="#696d84" stroke-width="0.95" fill="none" stroke-linejoin="round" stroke-linecap="round"/><path d="M2 8.6 H11.4 L2 13.2Z" stroke="#696d84" stroke-width="0.95" fill="none" stroke-linejoin="round" stroke-linecap="round"/><path d="M2 5 H11.4 L2 0.6Z" stroke-dasharray="1.5 1.2" stroke="#696d84" stroke-width="0.95" fill="none" stroke-linejoin="round" stroke-linecap="round"/></svg>
<svg style="position:absolute;left:421.5px;top:363.5px;" width="13" height="12.5" viewBox="0 0 13 12.5"><path d="M12 6.4 V2 A1.4 1.4 0 0 0 10.6 0.6 H2 A1.4 1.4 0 0 0 0.6 2 V10.4 A1.4 1.4 0 0 0 2 11.8 H6.6" stroke="#d3d5de" stroke-width="0.95" fill="none" stroke-linejoin="round" stroke-linecap="round"/><path d="M1 9.4 L4.4 5.8 L7 8.4 L8.6 6.8" stroke="#d3d5de" stroke-width="0.95" fill="none" stroke-linejoin="round" stroke-linecap="round"/><circle cx="8.6" cy="3.6" r="0.8" stroke="#d3d5de" stroke-width="0.95" fill="none" stroke-linejoin="round" stroke-linecap="round"/><path d="M8.6 10 H12.4 M8.6 12 H12.4" stroke="#d3d5de" stroke-width="0.95" fill="none" stroke-linejoin="round" stroke-linecap="round"/></svg>
<svg style="position:absolute;left:421.5px;top:387px;" width="12" height="13.5" viewBox="0 0 12 13.5"><path d="M0.6 0.5 V13" stroke="#696d84" stroke-width="0.95" fill="none" stroke-linejoin="round" stroke-linecap="round"/><rect x="3.2" y="2.6" width="8" height="2.2" rx="0.6" fill="#696d84" stroke="#696d84" stroke-width="0.95" fill="none" stroke-linejoin="round" stroke-linecap="round"/><rect x="3.2" y="8.2" width="4.6" height="2.2" rx="0.6" fill="#696d84" stroke="#696d84" stroke-width="0.95" fill="none" stroke-linejoin="round" stroke-linecap="round"/></svg>
<svg style="position:absolute;left:421.5px;top:406.5px;" width="13" height="13.5" viewBox="0 0 13 13.5"><path d="M0.6 0.5 V13 M12.2 0.5 V13" stroke="#d3d5de" stroke-width="0.95" fill="none" stroke-linejoin="round" stroke-linecap="round"/><rect x="5.2" y="2.6" width="2.4" height="8.4" rx="0.6" fill="#d3d5de" stroke="#d3d5de" stroke-width="0.95" fill="none" stroke-linejoin="round" stroke-linecap="round"/></svg>
<svg style="position:absolute;left:421.5px;top:430px;" width="13" height="13.8" viewBox="0 0 13 13.8"><path d="M6.4 0.6 L12 3.8 V10 L6.4 13.2 L0.8 10 V3.8Z" stroke="#696d84" stroke-width="0.95" fill="none" stroke-linejoin="round" stroke-linecap="round"/><circle cx="6.4" cy="6.9" r="1.7" stroke="#696d84" stroke-width="0.95" fill="none" stroke-linejoin="round" stroke-linecap="round"/></svg>
<div style="position:absolute;left:415px;top:162.8px;width:146px;height:27px;border:2px solid #cf0a0a;box-sizing:border-box;"></div>
<div style="position:absolute;left:2px;top:542.6px;width:850px;height:22.4px;background:#fff;"></div>
<div style="position:absolute;left:2px;top:541.4px;width:49px;height:1px;background:#efeff3;"></div>
<div style="position:absolute;left:0px;top:565px;width:854px;height:2px;background:#7c7c7c;"></div>
<div style="position:absolute;left:852px;top:0px;width:2px;height:567px;background:#7c7c7c;"></div>
<div style="position:absolute;left:0px;top:0px;width:854px;height:2px;background:#7c7c7c;"></div>
<div style="position:absolute;left:0px;top:0px;width:2px;height:567px;background:#727272;"></div>
<span class="t" style="left:10.60px;top:549px;font-size:10.2px;color:#555;transform:scaleX(0.8639);">27.94 x 21.59 cm</span>
<svg style="position:absolute;left:333px;top:547.8px;" width="10.5" height="12" viewBox="0 0 10.5 12"><path d="M2.6 6.6 V2.6 A0.9 0.9 0 0 1 4.4 2.6 V1.4 A0.9 0.9 0 0 1 6.2 1.4 V2.2 A0.9 0.9 0 0 1 8 2.2 V3.6 A0.9 0.9 0 0 1 9.8 3.6 V8 A3.6 3.6 0 0 1 6.2 11.4 H5.6 A3.4 3.4 0 0 1 2.8 9.8 L0.8 6.6 A0.9 0.9 0 0 1 2.4 5.8Z" stroke="#555a6e" stroke-width="1.05" fill="none" stroke-linejoin="round" stroke-linecap="round"/><path d="M4.4 2.6 V6 M6.2 2.2 V6 M8 3.6 V6" stroke="#555a6e" stroke-width="1.05" fill="none" stroke-linejoin="round" stroke-linecap="round"/></svg>
<svg style="position:absolute;left:356.8px;top:547.5px;" width="12" height="12" viewBox="0 0 12 12"><path d="M1.6 0.6 V11.2 M0.4 0.6 H2.8 M0.4 11.2 H2.8" stroke="#555a6e" stroke-width="1.05" fill="none" stroke-linejoin="round" stroke-linecap="round"/><path d="M4.8 2 V9.8 L6.8 8 L8.4 11.2 L9.8 10.6 L8.4 7.6 H11Z" stroke="#555a6e" stroke-width="1.05" fill="none" stroke-linejoin="round" stroke-linecap="round"/></svg>
<svg style="position:absolute;left:382.6px;top:548.5px;" width="9.5" height="9.5" viewBox="0 0 9.5 9.5"><path d="M0.8 0.4 V9 M8.4 0.6 L3.8 4.7 L8.4 8.8" stroke="#555a6e" stroke-width="1.05" fill="none" stroke-linejoin="round" stroke-linecap="round"/></svg>
<svg style="position:absolute;left:408.4px;top:548.5px;" width="6" height="9.5" viewBox="0 0 6 9.5"><path d="M5.2 0.6 L0.8 4.7 L5.2 8.8" stroke="#555a6e" stroke-width="1.05" fill="none" stroke-linejoin="round" stroke-linecap="round"/></svg>
<div style="position:absolute;left:427px;top:544.2px;width:47.6px;height:17px;border:1px solid #d3d5dd;background:#fff;"></div>
<span class="t" style="left:444.00px;top:549px;font-size:10.2px;color:#555;">2</span>
<span class="t" style="left:451.60px;top:549px;font-size:10.2px;color:#aaa;">/3</span>
<svg style="position:absolute;left:488.7px;top:548.5px;" width="6" height="9.5" viewBox="0 0 6 9.5"><path d="M0.8 0.6 L5.2 4.7 L0.8 8.8" stroke="#555a6e" stroke-width="1.05" fill="none" stroke-linejoin="round" stroke-linecap="round"/></svg>
<svg style="position:absolute;left:512px;top:548.5px;" width="9.5" height="9.5" viewBox="0 0 9.5 9.5"><path d="M8.6 0.4 V9 M1 0.6 L5.6 4.7 L1 8.8" stroke="#555a6e" stroke-width="1.05" fill="none" stroke-linejoin="round" stroke-linecap="round"/></svg>
<div style="position:absolute;left:622px;top:552.3px;width:9.5px;height:1.1px;background:#777;"></div>
<div style="position:absolute;left:681px;top:553px;width:47px;height:1px;background:#d5d7de;"></div>
<div style="position:absolute;left:648.6px;top:552.2px;width:26px;height:2.6px;background:#5c627e;border-radius:1px;"></div>
<div style="position:absolute;left:672.6px;top:549.2px;width:7.4px;height:7.4px;background:#fff;border:1.2px solid #555a72;border-radius:50%;"></div>
<svg style="position:absolute;left:745.7px;top:549px;" width="8" height="8" viewBox="0 0 8 8"><path d="M4 0 V8 M0 4 H8" stroke="#777" stroke-width="1.1" fill="none"/></svg>
<div style="position:absolute;left:766.3px;top:544px;width:50px;height:17.4px;border:1px solid #d3d5dd;background:#fff;"></div>
<span class="t" style="left:776.40px;top:549px;font-size:10.2px;color:#555;transform:scaleX(0.8229);">70%</span>
<svg style="position:absolute;left:806px;top:551.8px;" width="6" height="4" viewBox="0 0 6 4"><path d="M0.6 0.5 L2.9 2.9 L5.2 0.5" stroke="#555" stroke-width="1.1" fill="none"/></svg>
<svg style="position:absolute;left:827px;top:547px;" width="12" height="12" viewBox="0 0 12 12"><rect x="0.6" y="0.6" width="10.8" height="10.8" rx="1.6" stroke="#555a6e" stroke-width="1.05" fill="none" stroke-linejoin="round" stroke-linecap="round"/><path d="M3 3 L4.8 4.8 M4.9 3.3 V4.9 H3.3 M9 3 L7.2 4.8 M7.1 3.3 V4.9 H8.7 M3 9 L4.8 7.2 M4.9 8.7 V7.1 H3.3 M9 9 L7.2 7.2 M7.1 8.7 V7.1 H8.7" stroke="#555a6e" stroke-width="0.9" fill="none"/></svg>
</div></body></html>
